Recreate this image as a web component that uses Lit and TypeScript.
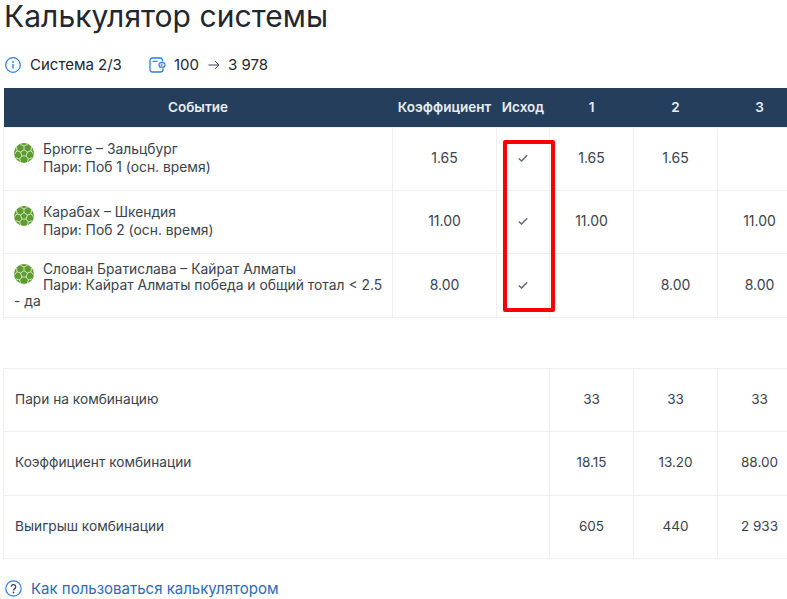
import { LitElement, html, css } from "lit";
import { customElement } from "lit/decorators.js";

const ball = html`<svg class="ball" viewBox="0 0 20 20">
  <circle cx="10" cy="10" r="10" fill="#5f9c30"/>
  <g fill="none" stroke="#dcebcd" stroke-width=".9">
    <path d="M10 6.6 L13.4 9 L12.1 13 H7.9 L6.6 9 Z"/>
    <path d="M10 6.6 V3 M13.4 9 L17 7.8 M12.1 13 L14.3 16 M7.9 13 L5.7 16 M6.6 9 L3 7.8"/>
    <path d="M10 3 L6.3 1.2 M10 3 L13.7 1.2 M17 7.8 L17.4 3.9 M17 7.8 L19.6 11 M14.3 16 L18 14.8 M14.3 16 L13.5 19.4 M5.7 16 L6.5 19.4 M5.7 16 L2 14.8 M3 7.8 L.4 11 M3 7.8 L2.6 3.9"/>
  </g>
</svg>`;

const check = html`<svg class="check" viewBox="0 0 12 10" width="10" height="8.4"><path d="M1 5.4 L4.3 8.4 L11 1.4" fill="none" stroke="#5d6878" stroke-width="1.8"/></svg>`;

const events = [
  { t: "Брюгге – Зальцбург", b: "Пари: Поб 1 (осн. время)", k: "1.65", c: ["1.65", "1.65", ""] },
  { t: "Карабах – Шкендия", b: "Пари: Поб 2 (осн. время)", k: "11.00", c: ["11.00", "", "11.00"] },
  { t: "Слован Братислава – Кайрат Алматы", b: "Пари: Кайрат Алматы победа и общий тотал < 2.5 - да", k: "8.00", c: ["", "8.00", "8.00"] },
];

const summary = [
  { l: "Пари на комбинацию", c: ["33", "33", "33"] },
  { l: "Коэффициент комбинации", c: ["18.15", "13.20", "88.00"] },
  { l: "Выигрыш комбинации", c: ["605", "440", "2 933"] },
];

@customElement("app-root")
export class AppRoot extends LitElement {
  static styles = css`
    :host {
      display: block;
      position: relative;
      width: 787px;
      height: 599px;
      overflow: hidden;
      background: #fff;
      font-family: Inter, "Noto Sans", sans-serif;
      color: #2b3440;
    }
    h1 {
      margin: 0;
      padding-left: 4px;
      font-size: 30px;
      line-height: 32px;
      font-weight: 400;
      letter-spacing: 0.05px;
      color: #22272e;
    }
    .info {
      display: flex;
      align-items: center;
      height: 20px;
      margin: 23px 0 0 5px;
      font-size: 15px;
      color: #22272e;
    }
    .info svg { display: block; }
    .info span { margin-bottom: 2px; }
    .sys { margin-left: 9px; }
    .wallet { margin-left: 27px; }
    .info .sum { margin-left: 8px; margin-right: 1px; }
    .arrow { margin: 0 8px 0 8px; }
    table {
      border-collapse: collapse;
      table-layout: fixed;
      width: 797px;
      margin-left: 3px;
      font-size: 14px;
    }
    .events { margin-top: 13px; }
    .totals { margin-top: 50px; }
    .c-ev { width: 389px; }
    .c-k { width: 104px; }
    .c-o { width: 53px; }
    .c-n { width: 84px; }
    .c-l { width: 546px; }
    th {
      height: 37px;
      padding: 0 0 2px;
      background: #243e5c;
      color: #e8edf2;
      font-size: 13.5px;
      font-weight: 600;
      text-align: center;
      white-space: nowrap;
    }
    td {
      padding: 0 0 2px;
      border: 1px solid #edeff4;
      text-align: center;
      color: #3a424e;
      line-height: 18px;
    }
    .events td { font-size: 14px; }
    tbody tr.r0 td { height: 60px; }
    tbody tr.r2 td { height: 61px; }
    .totals td { height: 60.3px; font-size: 13.5px; }
    .events td.ev { text-align: left; padding: 0 0 0 10px; font-size: 13.85px; vertical-align: middle; line-height: 17.6px; }
    .events tr.r2 td.ev { line-height: 16px; padding-bottom: 2px; }
    td.ev .ball { float: left; margin: 2px 9px 0 0; }
    tr.r2 td.ev .ball { margin-top: 3px; }
    td.l { text-align: left; padding: 0 0 2px 11px; }
    .totals td.l { font-size: 13.7px; }
    .ball { display: block; width: 20px; height: 20px; }
    .check { display: block; margin: 1px auto 0; }
    .mark {
      position: absolute;
      left: 503px;
      top: 140px;
      width: 44px;
      height: 164px;
      border: 4px solid #fb0007;
      border-radius: 2px;
      pointer-events: none;
    }
    .help {
      display: flex;
      align-items: center;
      margin: 20px 0 0 5px;
      font-size: 15px;
      color: #2a6ab8;
    }
    .help span { margin-left: 9px; }
    .help svg { display: block; }
  `;

  render() {
    return html`
      <h1>Калькулятор системы</h1>
      <div class="info">
        <svg width="16" height="16" viewBox="0 0 16 16" fill="none">
          <circle cx="8" cy="8" r="7.3" stroke="#2a7fd6" stroke-width="1.2"/>
          <circle cx="8" cy="4.9" r=".9" fill="#2a7fd6"/>
          <path d="M8 7v4.6" stroke="#2a7fd6" stroke-width="1.4"/>
        </svg>
        <span class="sys">Система 2/3</span>
        <svg class="wallet" width="17" height="16" viewBox="0 0 17 16" fill="none">
          <path d="M13.5 4.6V3.4A2.4 2.4 0 0 0 11.1 1H3.4A2.4 2.4 0 0 0 1 3.4v9.2A2.4 2.4 0 0 0 3.4 15h8.2a2.4 2.4 0 0 0 2.4-2.4v-1.4" stroke="#2a7fd6" stroke-width="1.3"/>
          <path d="M3.6 4.3h5" stroke="#2a7fd6" stroke-width="1.2"/>
          <rect x="10" y="5.6" width="6" height="4.6" rx="2.3" stroke="#2a7fd6" stroke-width="1.2"/>
          <circle cx="12.6" cy="7.9" r=".9" fill="#2a7fd6"/>
        </svg>
        <span class="sum">100</span>
        <svg class="arrow" width="12" height="10" viewBox="0 0 12 10" fill="none">
          <path d="M.5 5h10.4M7 1.2 10.9 5 7 8.8" stroke="#3a424e" stroke-width="1"/>
        </svg>
        <span>3 978</span>
      </div>

      <table class="events">
        <colgroup>
          <col class="c-ev" /><col class="c-k" /><col class="c-o" /><col class="c-n" /><col class="c-n" /><col class="c-n" />
        </colgroup>
        <thead>
          <tr><th>Событие</th><th>Коэффициент</th><th>Исход</th><th>1</th><th>2</th><th>3</th></tr>
        </thead>
        <tbody>
          ${events.map(
            (e, i) => html`<tr class="r${i === 2 ? 2 : 0}">
              <td class="ev">${ball}${e.t}<br />${e.b}</td>
              <td>${e.k}</td>
              <td>${check}</td>
              ${e.c.map((v) => html`<td>${v}</td>`)}
            </tr>`
          )}
        </tbody>
      </table>

      <table class="totals">
        <colgroup>
          <col class="c-l" /><col class="c-n" /><col class="c-n" /><col class="c-n" />
        </colgroup>
        <tbody>
          ${summary.map(
            (r) => html`<tr>
              <td class="l">${r.l}</td>
              ${r.c.map((v) => html`<td>${v}</td>`)}
            </tr>`
          )}
        </tbody>
      </table>

      <div class="help">
        <svg width="17" height="17" viewBox="0 0 17 17" fill="none">
          <circle cx="8.5" cy="8.5" r="7.7" stroke="#2a7fd6" stroke-width="1.2"/>
          <path d="M6.3 6.8a2.2 2.2 0 1 1 3.4 1.8c-.8.5-1.2.9-1.2 1.8" stroke="#3a424e" stroke-width="1.3"/>
          <circle cx="8.5" cy="12.4" r=".9" fill="#3a424e"/>
        </svg>
        <span>Как пользоваться калькулятором</span>
      </div>

      <div class="mark"></div>
    `;
  }
}
